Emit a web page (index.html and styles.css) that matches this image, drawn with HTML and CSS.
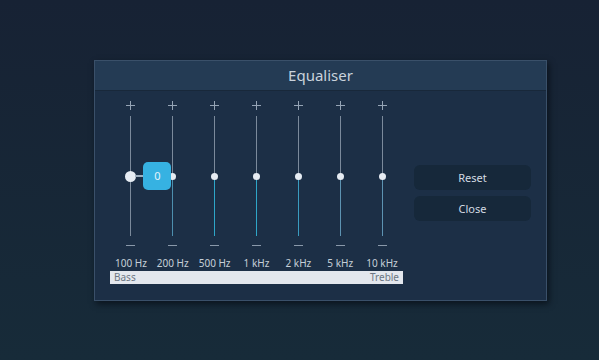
FILE: index.html
```html
<!DOCTYPE html>
<html lang="en">
<head>
    <meta charset="UTF-8">
    <title>Equaliser</title>
    <link rel="stylesheet" href="styles.css">
</head>
<body>
    <div class="dialog">
        <div class="header">Equaliser</div>
        <div class="body">
            <div class="bands">
                <div class="sliders">
                    <div class="band">
                        <span class="plus"></span>
                        <div class="track">
                            <span class="knob big"></span>
                            <span class="link"></span>
                            <span class="tip">0</span>
                        </div>
                        <span class="minus"></span>
                        <span class="label">100 Hz</span>
                    </div>
                    <div class="band">
                        <span class="plus"></span>
                        <div class="track f2"><span class="knob"></span></div>
                        <span class="minus"></span>
                        <span class="label">200 Hz</span>
                    </div>
                    <div class="band">
                        <span class="plus"></span>
                        <div class="track f3"><span class="knob"></span></div>
                        <span class="minus"></span>
                        <span class="label">500 Hz</span>
                    </div>
                    <div class="band">
                        <span class="plus"></span>
                        <div class="track f3"><span class="knob"></span></div>
                        <span class="minus"></span>
                        <span class="label">1 kHz</span>
                    </div>
                    <div class="band">
                        <span class="plus"></span>
                        <div class="track f4"><span class="knob"></span></div>
                        <span class="minus"></span>
                        <span class="label">2 kHz</span>
                    </div>
                    <div class="band">
                        <span class="plus"></span>
                        <div class="track f5"><span class="knob"></span></div>
                        <span class="minus"></span>
                        <span class="label">5 kHz</span>
                    </div>
                    <div class="band">
                        <span class="plus"></span>
                        <div class="track f5"><span class="knob"></span></div>
                        <span class="minus"></span>
                        <span class="label">10 kHz</span>
                    </div>
                </div>
                <div class="range">
                    <span>Bass</span>
                    <span>Treble</span>
                </div>
            </div>
            <div class="buttons">
                <button class="btn">Reset</button>
                <button class="btn">Close</button>
            </div>
        </div>
    </div>
</body>
</html>
```
FILE: styles.css
```css
html,body{
    margin:0;
    padding:0;
}
body{
    width:599px;
    height:360px;
    overflow:hidden;
    background:linear-gradient(#172234,#172b39);
    font-family:"Noto Sans","Open Sans",sans-serif;
    padding-top:60px;
    padding-left:94px;
    box-sizing:border-box;
}
.dialog{
    width:453px;
    height:241px;
    box-sizing:border-box;
    background-color:#1c2f46;
    border:1px solid #3a5069;
    box-shadow:2px 3px 6px rgba(5,12,18,0.7);
}
.header{
    height:29px;
    line-height:28px;
    background-color:#243b54;
    border-bottom:1px solid #18283a;
    text-align:center;
    color:#c9d2dc;
    font-size:15px;
}
.body{
    display:flex;
    padding:10px 14px 0 15px;
}
.bands{
    width:293px;
}
.sliders{
    display:flex;
}
.band{
    flex:1;
    display:flex;
    flex-direction:column;
    align-items:center;
}
/* plus drawn with two lines */
.plus{
    position:relative;
    width:9px;
    height:9px;
}
.plus::before,.plus::after{
    content:"";
    position:absolute;
    background-color:#95a4b5;
}
.plus::before{
    left:0;
    top:4px;
    width:9px;
    height:1px;
}
.plus::after{
    left:4px;
    top:0;
    width:1px;
    height:9px;
}
.track{
    position:relative;
    margin-top:6px;
    width:1px;
    height:120px;
    background-color:#7b8a9b;
}
.track.f2{background:linear-gradient(#7b8a9b 50%,#4d8fae 50%);}
.track.f3{background:linear-gradient(#7b8a9b 50%,#2ea6c8 50%);}
.track.f4{background:linear-gradient(#7b8a9b 50%,#3a9cc0 50%);}
.track.f5{background:linear-gradient(#7b8a9b 50%,#5d93b2 50%);}
.knob{
    position:absolute;
    left:-3px;
    top:57px;
    width:7px;
    height:7px;
    border-radius:50%;
    background-color:#e6ecf3;
}
.knob.big{
    left:-5px;
    top:55px;
    width:11px;
    height:11px;
}
.link{
    position:absolute;
    left:5px;
    top:59px;
    width:9px;
    height:2px;
    background-color:#9fb0c0;
}
.tip{
    position:absolute;
    left:13px;
    top:46px;
    width:28px;
    height:28px;
    line-height:28px;
    border-radius:5px;
    background-color:#36b2e2;
    color:#e4f4fb;
    font-size:11px;
    text-align:center;
    z-index:2;
}
.minus{
    margin-top:9px;
    width:9px;
    height:1px;
    background-color:#8a99aa;
}
.label{
    margin-top:10px;
    height:14px;
    line-height:14px;
    font-size:10px;
    color:#c6cfd8;
    white-space:nowrap;
}
.range{
    display:flex;
    justify-content:space-between;
    margin-top:1px;
    height:13px;
    line-height:13px;
    padding:0 4px;
    background-color:#e3e7ed;
    color:#6b7683;
    font-size:10px;
}
.buttons{
    margin-left:11px;
    padding-top:64px;
    display:flex;
    flex-direction:column;
    gap:6px;
}
.btn{
    width:117px;
    height:25px;
    border:none;
    border-radius:6px;
    background-color:#16283a;
    color:#d3dbe3;
    font-family:inherit;
    font-size:11px;
    padding:0;
}
```
